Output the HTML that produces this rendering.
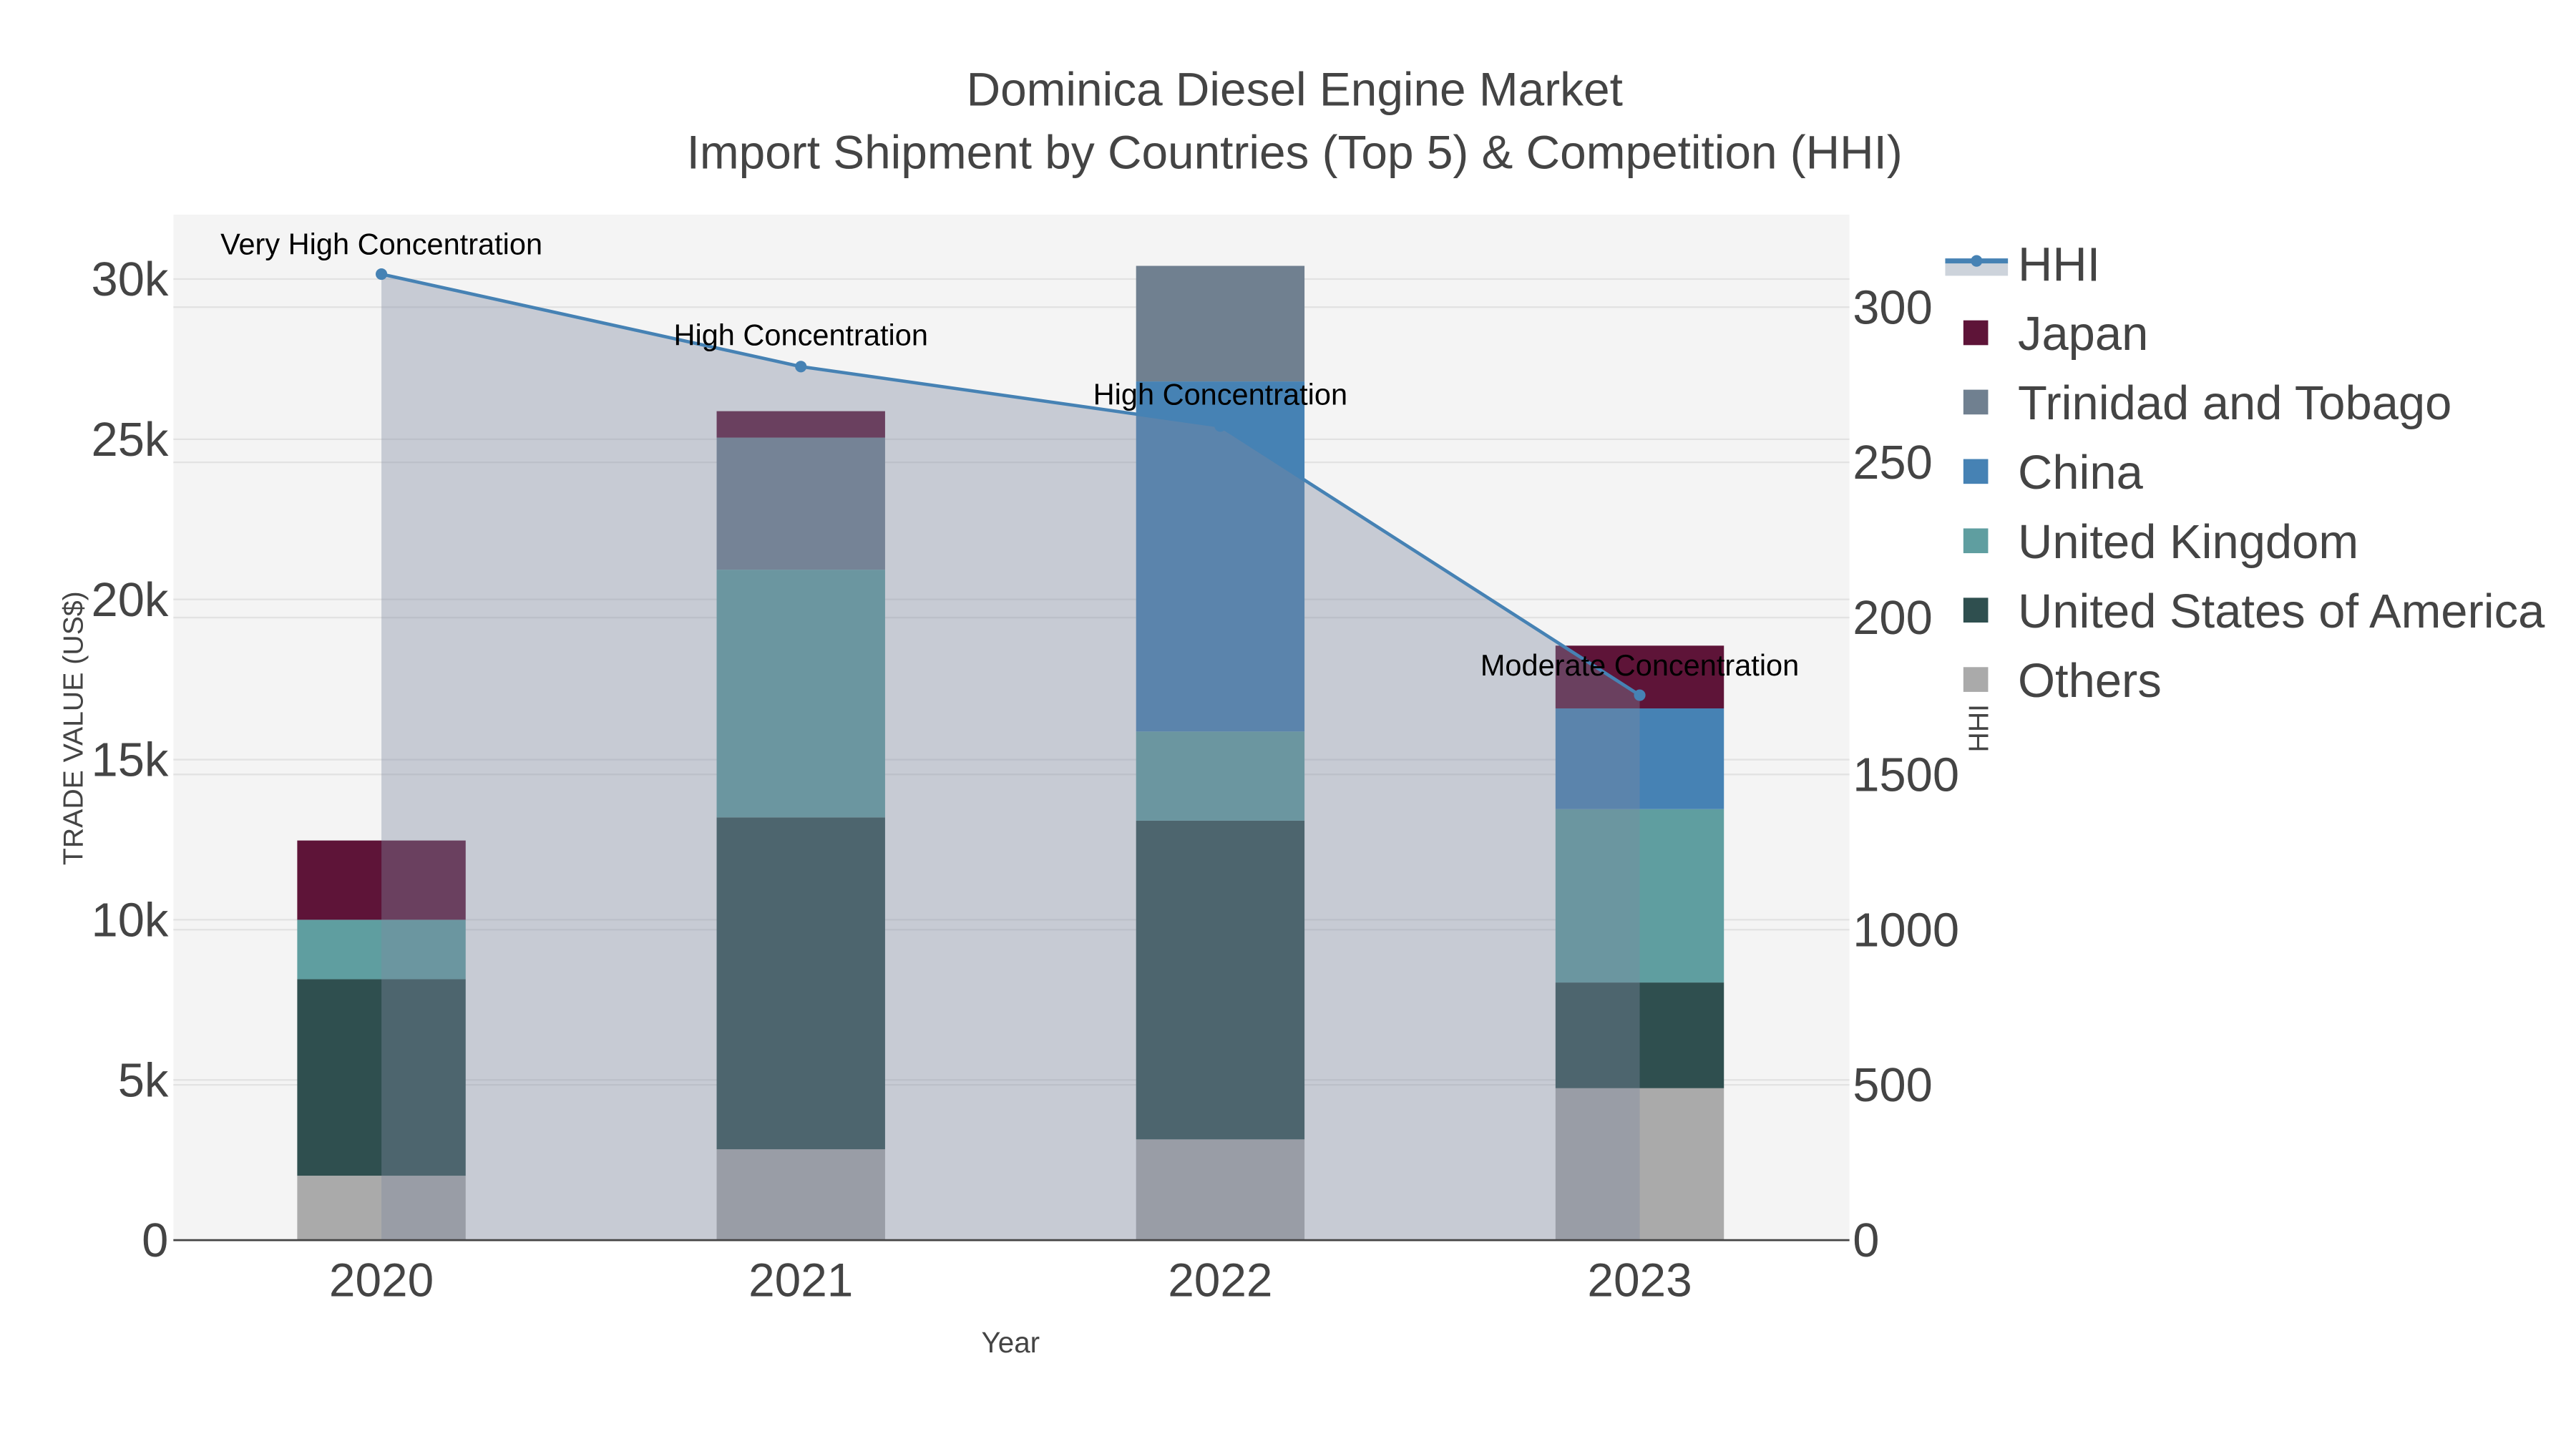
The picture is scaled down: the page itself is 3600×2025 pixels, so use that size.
<!DOCTYPE html>
<html><head><meta charset="utf-8"><style>
html,body{margin:0;padding:0;background:#fff;}
svg{display:block;font-family:"Liberation Sans",sans-serif;}
</style></head><body>
<svg width="3600" height="2025" viewBox="0 0 1560 877.5" xmlns="http://www.w3.org/2000/svg">
<rect x="0" y="0" width="1560" height="877.5" fill="#fff"/>
<rect x="105" y="130" width="1015" height="621" fill="#f4f4f4"/>
<g stroke="#e2e2e2" stroke-width="1">
<line x1="105" x2="1120" y1="654" y2="654"/><line x1="105" x2="1120" y1="557" y2="557"/>
<line x1="105" x2="1120" y1="460" y2="460"/><line x1="105" x2="1120" y1="363" y2="363"/>
<line x1="105" x2="1120" y1="266" y2="266"/><line x1="105" x2="1120" y1="169" y2="169"/>
<line x1="105" x2="1120" y1="657" y2="657"/><line x1="105" x2="1120" y1="563" y2="563"/>
<line x1="105" x2="1120" y1="469" y2="469"/><line x1="105" x2="1120" y1="374" y2="374"/>
<line x1="105" x2="1120" y1="280" y2="280"/><line x1="105" x2="1120" y1="186" y2="186"/>
</g>
<g>
<rect x="180" y="712" width="102" height="39" fill="#aaaaaa"/>
<rect x="180" y="593" width="102" height="119" fill="#2f4f4f"/>
<rect x="180" y="557" width="102" height="36" fill="#5f9ea0"/>
<rect x="180" y="509" width="102" height="48" fill="#5e1438"/>

<rect x="434" y="696" width="102" height="55" fill="#aaaaaa"/>
<rect x="434" y="495" width="102" height="201" fill="#2f4f4f"/>
<rect x="434" y="345" width="102" height="150" fill="#5f9ea0"/>
<rect x="434" y="265" width="102" height="80" fill="#708090"/>
<rect x="434" y="249" width="102" height="16" fill="#5e1438"/>

<rect x="688" y="690" width="102" height="61" fill="#aaaaaa"/>
<rect x="688" y="497" width="102" height="193" fill="#2f4f4f"/>
<rect x="688" y="443" width="102" height="54" fill="#5f9ea0"/>
<rect x="688" y="231" width="102" height="212" fill="#4682b4"/>
<rect x="688" y="161" width="102" height="70" fill="#708090"/>

<rect x="942" y="659" width="102" height="92" fill="#aaaaaa"/>
<rect x="942" y="595" width="102" height="64" fill="#2f4f4f"/>
<rect x="942" y="490" width="102" height="105" fill="#5f9ea0"/>
<rect x="942" y="429" width="102" height="61" fill="#4682b4"/>
<rect x="942" y="391" width="102" height="38" fill="#5e1438"/>
</g>
<polygon points="231,166 485,222 739,258 993,421 993,751 231,751" fill="rgb(127,137,160)" fill-opacity="0.38"/>
<polyline points="231,166 485,222 739,258 993,421" fill="none" stroke="#4682b4" stroke-width="2"/>
<g fill="#4682b4"><circle cx="231" cy="166" r="3.5"/><circle cx="485" cy="222" r="3.5"/><circle cx="739" cy="258" r="3.5"/><circle cx="993" cy="421" r="3.5"/></g>
<line x1="105" x2="1120" y1="751" y2="751" stroke="#444" stroke-width="1.2"/>
<g font-size="18" fill="#000" text-anchor="middle">
<text x="231" y="154">Very High Concentration</text>
<text x="485" y="209">High Concentration</text>
<text x="739" y="245">High Concentration</text>
<text x="993" y="409">Moderate Concentration</text>
</g>
<g fill="#444" text-anchor="middle" font-size="28.5">
<text x="784" y="64">Dominica Diesel Engine Market</text>
<text x="784" y="102">Import Shipment by Countries (Top 5) &amp; Competition (HHI)</text>
</g>
<g fill="#444" font-size="29" text-anchor="end">
<text x="102" y="761">0</text><text x="102" y="664">5k</text><text x="102" y="567">10k</text>
<text x="102" y="470">15k</text><text x="102" y="373">20k</text><text x="102" y="276">25k</text><text x="102" y="179">30k</text>
</g>
<g fill="#444" font-size="29">
<text x="1122" y="761">0</text><text x="1122" y="667">500</text><text x="1122" y="573">1000</text>
<text x="1122" y="479">1500</text><text x="1122" y="384">200</text><text x="1122" y="290">250</text><text x="1122" y="196">300</text>
</g>
<g fill="#444" font-size="28.5" text-anchor="middle">
<text x="231" y="785">2020</text><text x="485" y="785">2021</text><text x="739" y="785">2022</text><text x="993" y="785">2023</text>
</g>
<text x="612" y="819" fill="#444" font-size="17.5" text-anchor="middle">Year</text>
<text transform="translate(50,441) rotate(-90)" fill="#444" font-size="17" text-anchor="middle">TRADE VALUE (US$)</text>
<text transform="translate(1204,441) rotate(-90)" fill="#444" font-size="17" text-anchor="middle">HHI</text>
<rect x="1178" y="159" width="38" height="8" fill="#cdd3db"/>
<line x1="1178" x2="1216" y1="158" y2="158" stroke="#4682b4" stroke-width="3"/>
<circle cx="1197" cy="158" r="3.5" fill="#4682b4"/>
<g fill="#444" font-size="29">
<text x="1222" y="170">HHI</text>
<text x="1222" y="212">Japan</text>
<text x="1222" y="254">Trinidad and Tobago</text>
<text x="1222" y="296">China</text>
<text x="1222" y="338">United Kingdom</text>
<text x="1222" y="380">United States of America</text>
<text x="1222" y="422">Others</text>
</g>
<rect x="1189" y="194" width="15" height="15" fill="#5e1438"/>
<rect x="1189" y="236" width="15" height="15" fill="#708090"/>
<rect x="1189" y="278" width="15" height="15" fill="#4682b4"/>
<rect x="1189" y="320" width="15" height="15" fill="#5f9ea0"/>
<rect x="1189" y="362" width="15" height="15" fill="#2f4f4f"/>
<rect x="1189" y="404" width="15" height="15" fill="#aaaaaa"/>
</svg>
</body></html>
